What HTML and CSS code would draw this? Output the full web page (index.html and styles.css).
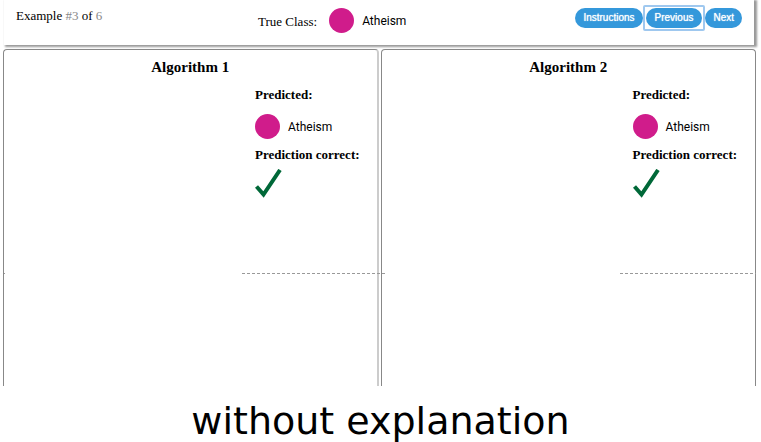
FILE: index.html
```html
<!DOCTYPE html>
<html lang="en">
<head>
<meta charset="utf-8">
<title>Algorithm comparison</title>
<link rel="stylesheet" href="styles.css">
</head>
<body>
<header class="bar">
  <div class="example">Example <span class="muted">#3</span> of <span class="muted">6</span></div>
  <div class="truth"><span class="truth-label">True Class:</span><span class="dot"></span><span class="class-name">Atheism</span></div>
  <nav class="actions">
    <button type="button" class="btn">Instructions</button>
    <button type="button" class="btn btn-focus">Previous</button>
    <button type="button" class="btn">Next</button>
  </nav>
</header>
<main class="panels">
  <section class="panel panel-first">
    <h2 class="title">Algorithm 1</h2>
    <div class="result">
      <h3 class="label">Predicted:</h3>
      <div class="prediction"><span class="dot"></span><span class="class-name">Atheism</span></div>
      <h3 class="label">Prediction correct:</h3>
      <svg class="check" viewBox="0 0 28 30" role="img" aria-label="Correct"><path d="M1.5 17.5 L8.5 25.5 L25 1" fill="none" stroke="#006838" stroke-width="4"/></svg>
    </div>
  </section>
  <section class="panel">
    <h2 class="title">Algorithm 2</h2>
    <div class="result">
      <h3 class="label">Predicted:</h3>
      <div class="prediction"><span class="dot"></span><span class="class-name">Atheism</span></div>
      <h3 class="label">Prediction correct:</h3>
      <svg class="check" viewBox="0 0 28 30" role="img" aria-label="Correct"><path d="M1.5 17.5 L8.5 25.5 L25 1" fill="none" stroke="#006838" stroke-width="4"/></svg>
    </div>
  </section>
</main>
<p class="caption">without explanation</p>
</body>
</html>
```
FILE: styles.css
```css
* {
  box-sizing: border-box;
}

body {
  display: flex;
  flex-direction: column;
  min-height: 100vh;
  margin: 0;
  background: #fff;
  color: #000;
  font: 13px/16px "Liberation Serif", serif;
}

.bar {
  display: grid;
  grid-template-columns: 242px 1fr auto;
  align-items: start;
  height: 45px;
  margin: 0 7px 0 4px;
  padding: 8px 12px 0 12px;
  box-shadow: 2px 1px 2px 1px #999;
}

.muted {
  color: #888;
}

.truth,
.prediction {
  display: flex;
  align-items: center;
}

.truth-label {
  padding-top: 2px;
  margin-right: 12px;
}

.dot {
  width: 25px;
  height: 25px;
  margin-right: 8px;
  border-radius: 50%;
  background: #d01c8b;
}

.class-name {
  font: 12px/16px Roboto, sans-serif;
}

.actions {
  display: flex;
  gap: 3px;
}

.btn {
  position: relative;
  height: 20px;
  padding: 0 8px;
  border: 0;
  border-radius: 10px;
  background: #3498db;
  color: #fff;
  font: 10px/20px "Liberation Sans", sans-serif;
  text-shadow: 0 0 1px #fff;
}

.btn-focus {
  padding: 0 9px;
}

.btn-focus::after {
  content: "";
  position: absolute;
  inset: -3px;
  border: 2px solid #9fc8ef;
  border-radius: 2px;
}

.panels {
  display: grid;
  flex: 1;
  grid-template-columns: 1fr 1fr;
  gap: 2px;
  margin: 4px 5px 0 3px;
  overflow: hidden;
}

.panel {
  min-width: 0;
  border: 1px solid #888;
  border-bottom: 0;
  border-radius: 4px 4px 0 0;
}

.panel-first {
  border-right: 2px solid #ccc;
}

/* End of the previous rule that runs in at the left edge */
.panel-first::before {
  content: "";
  position: absolute;
  top: 273px;
  width: 1px;
  height: 1px;
  background: #999;
}

.title {
  margin: 8px 0 11px;
  font-size: 15px;
  line-height: 18px;
  text-align: center;
}

.result {
  height: 187px;
  margin: 0 -8px 0 238px;
  padding-left: 13px;
  border-bottom: 1px dashed #999;
}

.label {
  margin: 0;
  font-size: 13px;
  line-height: 16px;
  white-space: nowrap;
}

.prediction {
  margin: 11px 0 8px;
}

.check {
  display: block;
  width: 28px;
  height: 30px;
  margin-top: 6px;
}

.caption {
  height: 56px;
  margin: 0;
  padding-top: 13px;
  font: 38px/44px "DejaVu Sans", sans-serif;
  text-align: center;
}
```
